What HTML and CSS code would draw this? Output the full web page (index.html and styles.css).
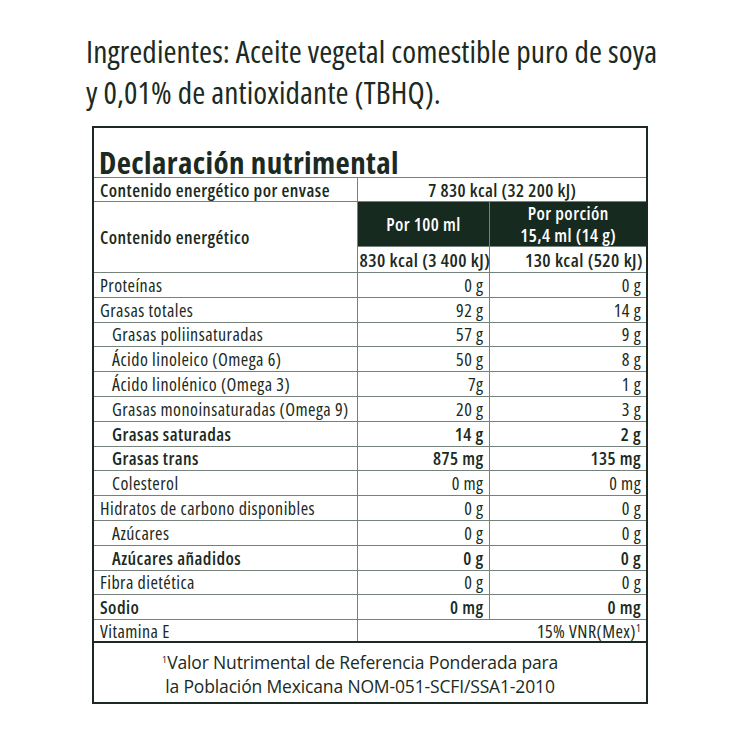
FILE: index.html
```html
<!DOCTYPE html>
<html lang="es">
<head>
<meta charset="utf-8">
<link rel="stylesheet" href="styles.css">
</head>
<body>
<main class="page">
  <p class="ingredients">Ingredientes: Aceite vegetal comestible puro de soya<br>y 0,01% de antioxidante (TBHQ).</p>
  <table class="nutri">
    <colgroup><col class="c1"><col class="c2"><col class="c3"></colgroup>
    <tr class="title-row"><th colspan="3" class="title">Declaración nutrimental</th></tr>
    <tr class="envase"><td class="b">Contenido energético por envase</td><td colspan="2" class="b center">7 830 kcal (32 200 kJ)</td></tr>
    <tr class="head"><td rowspan="2" class="b">Contenido energético</td><td class="dark">Por 100 ml</td><td class="dark">Por porción<br>15,4 ml (14 g)</td></tr>
    <tr class="kcal"><td class="b right">830 kcal (3 400 kJ)</td><td class="b right">130 kcal (520 kJ)</td></tr>
    <tr><td>Proteínas</td><td class="v">0 g</td><td class="v">0 g</td></tr>
    <tr><td>Grasas totales</td><td class="v">92 g</td><td class="v">14 g</td></tr>
    <tr><td class="in">Grasas poliinsaturadas</td><td class="v">57 g</td><td class="v">9 g</td></tr>
    <tr><td class="in">Ácido linoleico (Omega 6)</td><td class="v">50 g</td><td class="v">8 g</td></tr>
    <tr><td class="in">Ácido linolénico (Omega 3)</td><td class="v">7g</td><td class="v">1 g</td></tr>
    <tr><td class="in">Grasas monoinsaturadas (Omega 9)</td><td class="v">20 g</td><td class="v">3 g</td></tr>
    <tr><td class="in b">Grasas saturadas</td><td class="v b">14 g</td><td class="v b">2 g</td></tr>
    <tr><td class="in b">Grasas trans</td><td class="v b">875 mg</td><td class="v b">135 mg</td></tr>
    <tr><td class="in">Colesterol</td><td class="v">0 mg</td><td class="v">0 mg</td></tr>
    <tr><td>Hidratos de carbono disponibles</td><td class="v">0 g</td><td class="v">0 g</td></tr>
    <tr><td class="in">Azúcares</td><td class="v">0 g</td><td class="v">0 g</td></tr>
    <tr><td class="in b">Azúcares añadidos</td><td class="v b">0 g</td><td class="v b">0 g</td></tr>
    <tr><td>Fibra dietética</td><td class="v">0 g</td><td class="v">0 g</td></tr>
    <tr><td class="b">Sodio</td><td class="v b">0 mg</td><td class="v b">0 mg</td></tr>
    <tr class="vit"><td>Vitamina E</td><td colspan="2" class="v">15% VNR(Mex)<sup>1</sup></td></tr>
    <tr class="foot"><td colspan="3" class="note"><sup>1</sup>Valor Nutrimental de Referencia Ponderada para<br>la Población Mexicana NOM-051-SCFI/SSA1-2010</td></tr>
  </table>
</main>
</body>
</html>
```
FILE: styles.css
```css
html, body { margin: 0; padding: 0; background: #ffffff; }
body { color: #1b2a22; font-family: "Open Sans", "DejaVu Sans", sans-serif; font-stretch: 75%; }
.page { width: 740px; height: 740px; padding: 30px 0 0 86px; box-sizing: border-box; }
.ingredients { margin: 0; font-size: 31.5px; line-height: 41px; letter-spacing: 0.1px; }
.nutri { margin: 14px 0 0 6px; width: 554px; border-collapse: collapse; border: 2px solid #1b2a22; font-size: 18px; letter-spacing: 0.45px; table-layout: fixed; }
.c1 { width: 264px; }
.c2 { width: 132px; }
.c3 { width: 158px; }
.nutri td, .nutri th { border: 1px solid #75827b; padding: 0 5px 0 6px; height: 23.8px; line-height: 20px; white-space: nowrap; text-align: left; font-weight: 400; }
.title { height: 48px !important; vertical-align: bottom; font-size: 31px; letter-spacing: 0.4px; font-weight: 700 !important; line-height: 28px !important; padding-bottom: 1px !important; padding-left: 5px !important; }
.envase td { height: 23px; }
.b { font-weight: 600 !important; }
.center { text-align: center !important; }
.right { text-align: right !important; padding-right: 3px !important; padding-left: 2px !important; }
.kcal td { height: 25px; font-size: 18.5px; }
.v { text-align: right !important; padding-right: 5px !important; }
.in { padding-left: 18px !important; }
.head td { height: 42px; }
.dark { background: #172a20; color: #ffffff; font-weight: 600 !important; text-align: center !important; line-height: 22px !important; border-color: #75827b; }
.dark + .dark { border-left: 1px solid #c9cfcb; }
.vit td { height: 21px; border-bottom: 2px solid #1b2a22; }
.foot td { height: 52px; }
.note { text-align: center !important; font-size: 17.5px; font-stretch: 100%; letter-spacing: -0.15px; line-height: 24px !important; padding: 7px 20px 0 0 !important; vertical-align: top; }
sup { font-size: 60%; line-height: 0; vertical-align: 0.6em; }
.note sup { font-size: 55%; }
```
